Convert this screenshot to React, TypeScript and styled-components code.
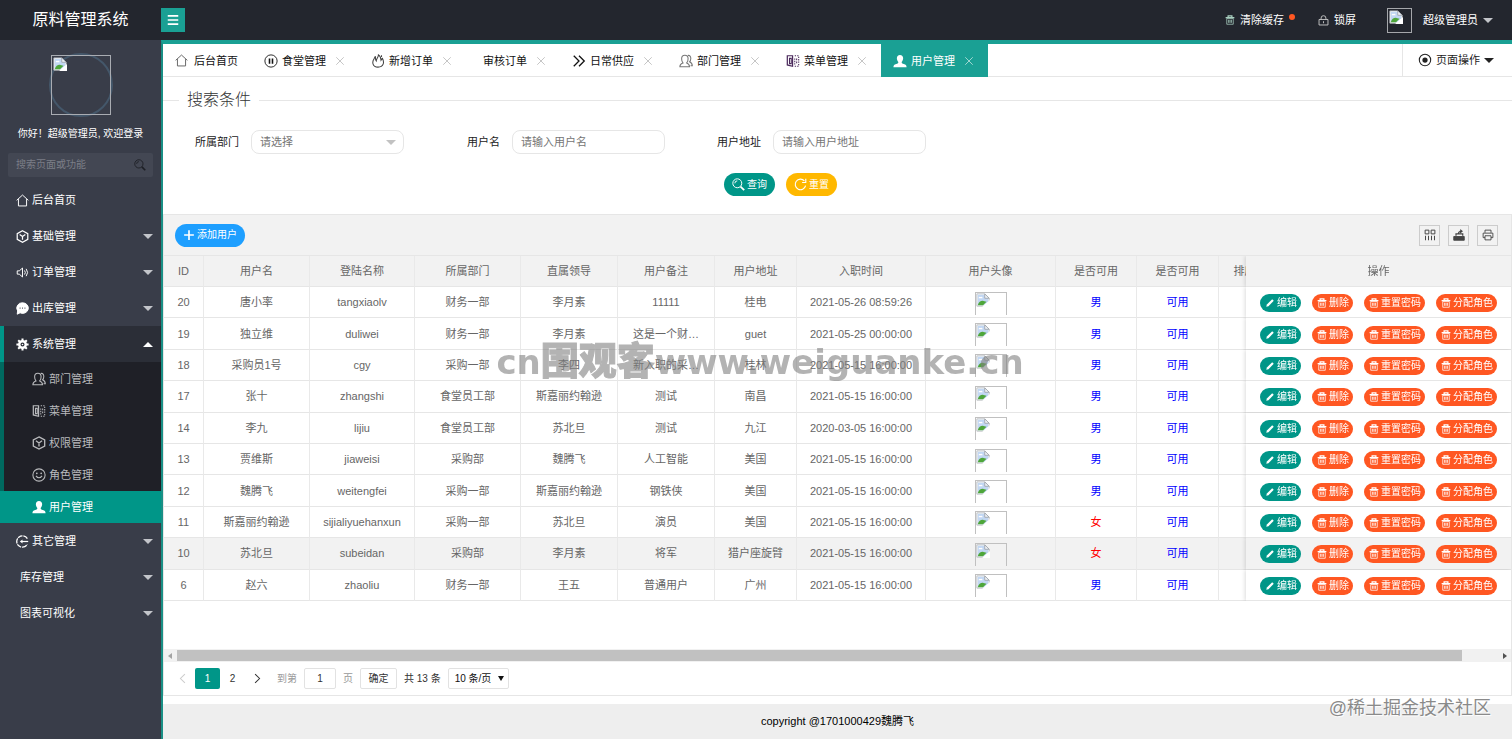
import React from "react";
import styled, { createGlobalStyle, css } from "styled-components";

const GlobalStyle = createGlobalStyle`
  *, *::before, *::after { box-sizing: border-box; }
  body {
    margin: 0;
    font-family: "Liberation Sans", "Noto Sans CJK SC", sans-serif;
    font-size: 11px;
    line-height: 16px;
    color: #222;
    background: #fff;
  }
  button, input, select { font: inherit; color: inherit; margin: 0; }
  button { cursor: pointer; }
  a { color: inherit; text-decoration: none; }
`;

/* ---------- icons ---------- */

type IconName =
  | "home" | "cube" | "sound" | "chat" | "gear" | "group" | "template" | "smile" | "user"
  | "login" | "pause" | "fire" | "more" | "trash" | "lock" | "target" | "search" | "refresh"
  | "plus" | "edit" | "columns" | "export" | "print" | "close" | "menu" | "left" | "right";

const glyphs: Record<IconName, React.ReactNode> = {
  home: <path d="M.8 7.800 8 1.300l7.200 6.500M3 6.300v8.400h10V6.300" />,
  cube: <path d="M8 1 14.500 4.500v7L8 15l-6.500-3.500v-7zM4.500 5.500 8 8l3.500-2.500M8 8v4" strokeWidth="1.500" />,
  sound: <path d="M1.500 6v4h2.500l4 3.500v-11L4 6zM10.500 5.500q2 2.500 0 5M12.500 3.500q3.500 4.500 0 9" />,
  chat: (
    <>
      <path d="M8 1a7 6.500 0 1 1-3 12.300L1.500 15l.5-4A6.500 6.500 0 0 1 8 1z" fill="currentColor" />
      <path d="M4.500 7.500h1M7.500 7.500h1M10.500 7.500h1" stroke="#393D49" strokeWidth="1.600" />
    </>
  ),
  gear: (
    <>
      <circle cx="8" cy="8" r="4" strokeWidth="3" />
      <path d="M8 .5v3M8 12.500v3M.5 8h3M12.500 8h3M2.700 2.700l2 2M11.300 11.300l2 2M2.700 13.300l2-2M11.300 4.700l2-2" strokeWidth="2.500" />
      <circle cx="8" cy="8" r="1" fill="currentColor" stroke="none" />
    </>
  ),
  group: (
    <>
      <path d="M1 14.500c0-3 1.500-3.500 3.500-4.300C3 8.500 3 6.500 3 5.500a3.700 4 0 0 1 7.400 0c0 1.500-.2 3.300-1.600 4.700 2 .8 3.200 1.500 3.200 4.300z" />
      <path d="M10 1.600c2.500-.4 3.500 1.400 3.500 3.400 0 1.800-.6 2.900-1.500 3.900 1.700.7 3.200 1.600 3.200 4.600h-2" />
    </>
  ),
  template: (
    <>
      <path d="M1.500 2h6v12l-6-1.500z" strokeWidth="1.400" />
      <path d="M4 5h2v6H4z" />
      <path d="M10 2h5M10 14h5M10 5v7M14.500 3v10" strokeDasharray="1.500 1.300" />
      <path d="M12.200 5v6" strokeDasharray="2 1.500" />
    </>
  ),
  smile: (
    <>
      <circle cx="8" cy="8" r="7" />
      <path d="M4.500 9q3.500 4.500 7 0" />
      <circle cx="5.500" cy="6" r="1" fill="currentColor" stroke="none" />
      <circle cx="10.500" cy="6" r="1" fill="currentColor" stroke="none" />
    </>
  ),
  user: (
    <path
      d="M8 1c2.300 0 3.600 1.600 3.600 3.800 0 1.800-.8 3.200-1.700 4.200 0 1.500.6 1.800 2.500 2.500C14.500 12.200 15.500 13 15.500 15H.5c0-2 1-2.800 3.100-3.500C5.500 10.800 6.100 10.500 6.100 9c-.9-1-1.700-2.400-1.700-4.200C4.400 2.600 5.700 1 8 1z"
      fill="currentColor"
      stroke="none"
    />
  ),
  login: (
    <>
      <path d="M14 4.500A7 7 0 1 0 14 11.500" strokeWidth="1.600" strokeDasharray="6 1" />
      <path d="M5.500 8H15" strokeWidth="1.500" />
      <path d="M5 8l3-2.500v5z" fill="currentColor" stroke="none" />
    </>
  ),
  pause: (
    <>
      <circle cx="8" cy="8" r="7" strokeWidth="1" />
      <path d="M6.300 5v6M9.700 5v6" strokeWidth="1.800" />
    </>
  ),
  fire: <path d="M3.500 5.500C1 9 1.500 14.800 8 15c6.500-.2 7.500-5.500 5-10l-1.500 2C11.500 4 10 2 8.500 1 8.500 4 6 5 6 8 5 7 5 4.500 5 2.500zM12 1.500v2" />,
  more: <path d="M2 2l6 6-6 6M8 2l6 6-6 6" strokeWidth="1.500" />,
  trash: (
    <>
      <path d="M1 4h14M5 4V1.500h6V4" strokeWidth="2" />
      <path d="M2.800 5.500h10.400v9.300H2.800z" />
      <path d="M5.800 7.500v5M8 7.500v5M10.200 7.500v5" strokeWidth="1.300" />
    </>
  ),
  lock: <path d="M1.500 6.500h13v8h-13zM4.500 6.500v-2a3.500 3.500 0 0 1 7 0v2M8 9v3" strokeWidth="1.300" />,
  target: (
    <>
      <circle cx="8" cy="8" r="6.500" />
      <circle cx="8" cy="8" r="3" fill="currentColor" stroke="none" />
    </>
  ),
  search: (
    <>
      <circle cx="6.500" cy="6.500" r="5.500" />
      <path d="M3.500 6.500a3 3 0 0 1 3-3" />
      <path d="M10.500 10.500l4.500 4.500" strokeWidth="2.200" />
    </>
  ),
  refresh: <path d="M14.300 9.500A6.500 6.500 0 1 1 12.800 3.500M14.500 1v4.500H10" strokeWidth="1.400" />,
  plus: <path d="M8 1.500v13M1.500 8h13" strokeWidth="2.200" />,
  edit: <path d="M2 14l1-3.500L11.500 2 14 4.500 5.500 13z" fill="currentColor" stroke="none" />,
  columns: <path d="M1.500 1.500h5v5h-5zM9.500 1.500h5v5h-5zM2 9v6M6 9v6M10 9v6M14 9v6" strokeWidth="1.300" />,
  export: (
    <>
      <path d="M1 10h14v5H1z" fill="currentColor" />
      <path d="M4 9V6.500h9V9M7 6.500c.5-3 2-3.500 4-3.500M9.500 1l2.500 2-2.500 2" strokeWidth="1.600" />
    </>
  ),
  print: <path d="M4 5V1.500h8V5M4 11.500H1.500V5.500h13v6H12M4 9h8v5.500H4z" />,
  close: <path d="M2 2l12 12M14 2 2 14" strokeWidth="1.500" />,
  menu: <path d="M1 2.500h14M1 8h14M1 13.500h14" strokeWidth="2.200" />,
  left: <path d="M11.500 1.500 5 8l6.500 6.500" strokeWidth="1.500" />,
  right: <path d="M4.500 1.500 11 8l-6.500 6.500" strokeWidth="1.500" />,
};

const Svg = styled.svg<{ $color?: string }>`
  display: block;
  flex: none;
  color: ${(p) => p.$color ?? "inherit"};
`;

const Icon = ({ name, size = 12, color }: { name: IconName; size?: number; color?: string }) => (
  <Svg width={size} height={size} viewBox="0 0 16 16" fill="none" stroke="currentColor" strokeWidth="1.2" $color={color} aria-hidden="true">
    {glyphs[name]}
  </Svg>
);

const Caret = styled.span<{ $up?: boolean; $color?: string }>`
  width: 0;
  height: 0;
  flex: none;
  border: 5px solid transparent;
  border-top-width: ${(p) => (p.$up ? 0 : 5)}px;
  border-bottom-width: ${(p) => (p.$up ? 5 : 0)}px;
  border-${(p) => (p.$up ? "bottom" : "top")}-color: ${(p) => p.$color ?? "#c3c5ca"};
`;

const BrokenImage = () => (
  <Svg width="14" height="14" viewBox="0 0 16 16" aria-hidden="true">
    <path d="M1 1h9l5 5v9H1z" fill="#fff" stroke="#b5b8bd" />
    <path d="M2 2h8v4h4v4L9 14H2z" fill="#c2d7f3" />
    <path d="M3 5.500q1-2 2.500-1 2-.5 2 1.500H3z" fill="#fff" />
    <path d="M2 14c1-4 4-5.500 6.500-5L12 10l-4 4z" fill="#4ea63a" />
    <path d="M10 1v5h5z" fill="#f4f6fa" stroke="#9aa0a8" />
    <path d="M7 16 16 8v8z" fill="#fff" />
  </Svg>
);

/* ---------- shell ---------- */

const Page = styled.div`
  display: flex;
  flex-direction: column;
  min-height: 100vh;
  position: relative;
`;

const Header = styled.header`
  height: 40px;
  display: flex;
  align-items: center;
  background: #23262e;
  color: #fff;
`;

const Brand = styled.h1`
  width: 161px;
  margin: 0;
  text-align: center;
  font-size: 16px;
  font-weight: 400;
  line-height: 40px;
`;

const MenuButton = styled.button`
  width: 24px;
  height: 24px;
  padding: 0;
  border: 0;
  display: grid;
  place-items: center;
  background: #1aa094;
  color: #fff;
`;

const HeaderNav = styled.nav`
  margin-left: auto;
  padding-right: 19px;
  display: flex;
  align-items: center;
  gap: 23px;
`;

const HeaderLink = styled.a<{ $wide?: boolean }>`
  display: flex;
  align-items: center;
  gap: 5px;
  margin-left: ${(p) => (p.$wide ? 8 : 0)}px;
`;

const Dot = styled.span`
  width: 6px;
  height: 6px;
  margin-bottom: 6px;
  border-radius: 50%;
  background: #ff5722;
`;

const SmallAvatar = styled.span`
  width: 25px;
  height: 25px;
  margin-right: 6px;
  border: 1px solid #a5a7ab;
  padding: 1px;
`;

const Body = styled.div`
  flex: 1;
  display: flex;
`;

const Sidebar = styled.aside`
  width: 161px;
  flex: none;
  background: #393d49;
  color: #fff;
`;

const Avatar = styled.div`
  width: 64px;
  height: 64px;
  margin: 13px auto 0;
  border: 2px solid #44576a;
  border-radius: 50%;
  display: grid;
  place-items: center;
`;

const AvatarFrame = styled.span`
  width: 60px;
  height: 60px;
  border: 1px solid #a9acb2;
  padding: 1px;
`;

const Greeting = styled.p`
  margin: 9px 0 11px;
  text-align: center;
  font-size: 10px;
  white-space: nowrap;
`;

const SideSearch = styled.form`
  height: 24px;
  margin: 0 8px 5px;
  padding: 0 7px 0 8px;
  display: flex;
  align-items: center;
  background: #434753;
  border-radius: 2px;
`;

const SideSearchInput = styled.input`
  flex: 1;
  min-width: 0;
  padding: 0;
  border: 0;
  outline: 0;
  background: none;
  font-size: 10px;
  &::placeholder { color: #7b7e87; opacity: 1; }
`;

const GhostButton = styled.button`
  padding: 0;
  border: 0;
  background: none;
  display: flex;
`;

const NavItem = styled.a<{ $open?: boolean; $plain?: boolean }>`
  height: 36px;
  padding: 0 8px 0 ${(p) => (p.$plain ? 20 : 16)}px;
  display: flex;
  align-items: center;
  gap: 3px;
  ${(p) => p.$open && css`
    background: #2b2e37;
    box-shadow: inset 4px 0 #009688;
  `}
`;

const NavLabel = styled.span`
  flex: 1;
`;

const SubNav = styled.div`
  padding-top: 1px;
  background: #1f2027;
  box-shadow: inset 4px 0 #00695f;
`;

const SubItem = styled.a<{ $active?: boolean }>`
  height: 32px;
  padding-left: 32px;
  display: flex;
  align-items: center;
  gap: 3px;
  color: ${(p) => (p.$active ? "#fff" : "#b9babd")};
  background: ${(p) => (p.$active ? "#009688" : "none")};
`;

const Main = styled.main`
  flex: 1;
  min-width: 0;
  display: flex;
  flex-direction: column;
  border-top: 4px solid #1aa094;
  border-left: 2px solid #1a8f85;
`;

/* ---------- tabs ---------- */

const TabBar = styled.div`
  height: 33px;
  display: flex;
  border-bottom: 1px solid #e6e6e6;
`;

const Tab = styled.div<{ $active?: boolean; $home?: boolean; $bare?: boolean }>`
  height: 33px;
  padding: 0 14px 0 ${(p) => (p.$bare ? 17 : 12)}px;
  display: flex;
  align-items: center;
  gap: ${(p) => (p.$home ? 6 : 4)}px;
  white-space: nowrap;
  color: ${(p) => (p.$active ? "#fff" : "#111")};
  background: ${(p) => (p.$active ? "#1aa094" : "none")};
`;

const TabClose = styled.button<{ $active?: boolean }>`
  margin-left: 5px;
  padding: 0;
  border: 0;
  background: none;
  color: ${(p) => (p.$active ? "#a6d9d4" : "#c2c2c2")};
`;

const PageActions = styled.button`
  margin-left: auto;
  padding: 0 18px 0 15px;
  border: 0;
  border-left: 1px solid #e6e6e6;
  background: none;
  display: flex;
  align-items: center;
  gap: 4px;
`;

/* ---------- search form ---------- */

const SearchSet = styled.fieldset`
  margin: 11px 0 0;
  padding: 18px 0;
  border: 0;
  border-top: 1px solid #e6e6e6;
  min-width: 0;
`;

const Legend = styled.legend`
  margin-left: 16px;
  padding: 0 8px;
  font-size: 16px;
  line-height: 24px;
  font-weight: 300;
  color: #333;
`;

const Fields = styled.div`
  padding-left: 12px;
  display: flex;
  flex-wrap: wrap;
  gap: 12px 32px;
`;

const Field = styled.div`
  display: flex;
  align-items: center;
`;

const FieldLabel = styled.label`
  width: 76px;
  padding-right: 12px;
  text-align: right;
`;

const fieldBox = css`
  width: 153px;
  height: 24px;
  padding: 0 8px;
  border: 1px solid #e6e6e6;
  border-radius: 8px;
  outline: 0;
  background: #fff;
  color: #757575;
`;

const TextInput = styled.input`
  ${fieldBox}
  &::placeholder { color: #757575; opacity: 1; }
`;

const SelectWrap = styled.span`
  display: grid;
  align-items: center;
  & > * { grid-area: 1 / 1; }
  & > span { justify-self: end; margin-right: 8px; pointer-events: none; }
`;

const Select = styled.select`
  ${fieldBox}
  appearance: none;
`;

const FormActions = styled.div`
  margin-top: 19px;
  padding-right: 114px;
  display: flex;
  justify-content: center;
  gap: 11px;
`;

const PillButton = styled.button<{ $bg: string }>`
  height: 23px;
  padding: 0 8px;
  border: 0;
  border-radius: 12px;
  display: flex;
  align-items: center;
  gap: 2px;
  font-size: 10px;
  color: #fff;
  background: ${(p) => p.$bg};
`;

/* ---------- data table ---------- */

const TableFrame = styled.section`
  flex: 1;
  min-height: 0;
  display: flex;
  flex-direction: column;
  border: 1px solid #e6e6e6;
`;

const Toolbar = styled.div`
  height: 41px;
  padding: 0 13px 0 11px;
  display: flex;
  align-items: center;
  gap: 8px;
  background: #f2f2f2;
  border-bottom: 1px solid #e6e6e6;
  & > :first-child { margin-right: auto; }
`;

const ToolButton = styled.button`
  width: 21px;
  height: 21px;
  padding: 0;
  border: 1px solid #ccc;
  display: grid;
  place-items: center;
  background: none;
  color: #444;
`;

const Scroller = styled.div`
  flex: 1;
  overflow: hidden;
`;

const Table = styled.table`
  width: 1372px;
  min-width: 100%;
  height: 345px;
  table-layout: fixed;
  border-collapse: separate;
  border-spacing: 0;
  color: #666;
`;

const cell = css`
  padding: 0 12px;
  border-right: 1px solid #e9e9e9;
  border-bottom: 1px solid #e6e6e6;
  text-align: center;
  font-weight: 400;
  white-space: nowrap;
  overflow: hidden;
  text-overflow: ellipsis;
`;

const Th = styled.th<{ $w: number }>`
  ${cell}
  width: ${(p) => p.$w}px;
  height: 31px;
  background: #f2f2f2;
`;

const Td = styled.td<{ $color?: string }>`
  ${cell}
  color: ${(p) => p.$color ?? "inherit"};
`;

const Row = styled.tr<{ $hover?: boolean }>`
  background: ${(p) => (p.$hover ? "#f2f2f2" : "#fff")};
`;

const fixed = css`
  position: sticky;
  right: 0;
  border-right: 0;
  padding: 0;
  box-shadow: -1px 0 4px rgba(0, 0, 0, 0.14);
  overflow: visible;
  clip-path: inset(0 0 0 -6px);
`;

const FixedTh = styled(Th)`${fixed}`;
const FixedTd = styled(Td)`
  ${fixed}
  background: inherit;
`;

const Thumb = styled.span`
  display: block;
  width: 32px;
  height: 23px;
  margin: 2px auto 0;
  border: 1px solid #c0c0c0;
  border-bottom: 0;
`;

const RowActions = styled.div`
  display: flex;
  justify-content: center;
  padding-top: 2px;
  gap: 11px;
`;

const MiniButton = styled.button<{ $bg: string }>`
  height: 18px;
  padding: 0 4px 0 5px;
  border: 0;
  border-radius: 9px;
  display: flex;
  align-items: center;
  gap: 2px;
  font-size: 10px;
  line-height: 18px;
  color: #fff;
  background: ${(p) => p.$bg};
`;

const ScrollBar = styled.div`
  height: 13px;
  padding: 1px 4px;
  display: flex;
  align-items: center;
  background: #f1f1f1;
`;

const ScrollArrow = styled.span<{ $right?: boolean; $color: string }>`
  border: 3px solid transparent;
  border-left: ${(p) => (p.$right ? `4px solid ${p.$color}` : "0")};
  border-right: ${(p) => (p.$right ? "0" : `4px solid ${p.$color}`)};
`;

const ScrollTrack = styled.span`
  flex: 1;
  height: 11px;
  margin: 0 5px;
  padding-right: 36px;
`;

const ScrollThumb = styled.span`
  display: block;
  height: 11px;
  background: #c1c1c1;
`;

const Pager = styled.nav`
  height: 33px;
  padding-left: 6px;
  display: flex;
  align-items: center;
  gap: 7px;
  font-size: 10px;
  color: #333;
`;

const PageLinks = styled.div`
  display: flex;
`;

const PageLink = styled.a<{ $current?: boolean; $muted?: boolean }>`
  width: 25px;
  height: 21px;
  display: grid;
  place-items: center;
  border-radius: 2px;
  color: ${(p) => (p.$current ? "#fff" : p.$muted ? "#ccc" : "#333")};
  background: ${(p) => (p.$current ? "#009688" : "none")};
`;

const JumpLabel = styled.label`
  display: flex;
  align-items: center;
  gap: 7px;
  color: #999;
`;

const PageInput = styled.input`
  width: 32px;
  height: 21px;
  padding: 0;
  border: 1px solid #e2e2e2;
  border-radius: 2px;
  text-align: center;
  color: #333;
`;

const PageButton = styled.button`
  width: 37px;
  height: 21px;
  padding: 0;
  border: 1px solid #e2e2e2;
  border-radius: 2px;
  background: #fff;
`;

const SizeWrap = styled(SelectWrap)`
  & > span { margin-right: 5px; }
`;

const SizeSelect = styled.select`
  appearance: none;
  width: 61px;
  height: 21px;
  padding: 0 6px;
  border: 1px solid #e2e2e2;
  border-radius: 2px;
  background: #fff;
  color: #111;
`;

const SizeArrow = styled.span`
  border: 3px solid transparent;
  border-top: 5px solid #111;
  border-bottom: 0;
`;

const Footer = styled.footer`
  height: 35px;
  margin-top: 8px;
  line-height: 35px;
  text-align: center;
  color: #000;
  background: #eee;
`;

/* ---------- overlays ---------- */

const CenterMark = styled.div`
  position: absolute;
  left: 50%;
  top: 336px;
  transform: translateX(-50%);
  margin-left: 4px;
  display: flex;
  align-items: baseline;
  font-family: "DejaVu Sans", "Noto Sans CJK SC", sans-serif;
  font-weight: 700;
  font-size: 34px;
  line-height: 44px;
  white-space: nowrap;
  color: #808080;
  opacity: 0.6;
  pointer-events: none;
`;

const CenterMarkHan = styled.span`
  font-family: "Noto Sans CJK SC", sans-serif;
  font-size: 38px;
  font-weight: 900;
  -webkit-text-stroke: 1px #808080;
`;

const CornerMark = styled.div`
  position: absolute;
  right: 21px;
  bottom: 19px;
  font-size: 18px;
  line-height: 24px;
  color: #8a8a8a;
  text-shadow: 0 0 2px #fff, 1px 1px 1px #fff;
  pointer-events: none;
`;

/* ---------- data ---------- */

type NavEntry = { label: string; icon?: IconName; leaf?: boolean; children?: { label: string; icon: IconName; active?: boolean }[] };

const navEntries: NavEntry[] = [
  { label: "后台首页", icon: "home", leaf: true },
  { label: "基础管理", icon: "cube" },
  { label: "订单管理", icon: "sound" },
  { label: "出库管理", icon: "chat" },
  {
    label: "系统管理",
    icon: "gear",
    children: [
      { label: "部门管理", icon: "group" },
      { label: "菜单管理", icon: "template" },
      { label: "权限管理", icon: "cube" },
      { label: "角色管理", icon: "smile" },
      { label: "用户管理", icon: "user", active: true },
    ],
  },
  { label: "其它管理", icon: "login" },
  { label: "库存管理" },
  { label: "图表可视化" },
];

const tabs: { label: string; icon?: IconName; color?: string }[] = [
  { label: "食堂管理", icon: "pause" },
  { label: "新增订单", icon: "fire", color: "#444" },
  { label: "审核订单" },
  { label: "日常供应", icon: "more" },
  { label: "部门管理", icon: "group", color: "#777" },
  { label: "菜单管理", icon: "template", color: "#4b2a5c" },
];

const columns: [string, number][] = [
  ["ID", 40], ["用户名", 106], ["登陆名称", 105], ["所属部门", 106], ["直属领导", 97], ["用户备注", 97],
  ["用户地址", 82], ["入职时间", 129], ["用户头像", 130], ["是否可用", 81], ["是否可用", 82], ["排序", 52],
];

const users: [number, string, string, string, string, string, string, string, string][] = [
  [20, "唐小率", "tangxiaolv", "财务一部", "李月素", "11111", "桂电", "2021-05-26 08:59:26", "男"],
  [19, "独立维", "duliwei", "财务一部", "李月素", "这是一个财…", "guet", "2021-05-25 00:00:00", "男"],
  [18, "采购员1号", "cgy", "采购一部", "李四", "新入职的采…", "桂林", "2021-05-15 16:00:00", "男"],
  [17, "张十", "zhangshi", "食堂员工部", "斯嘉丽约翰逊", "测试", "南昌", "2021-05-15 16:00:00", "男"],
  [14, "李九", "lijiu", "食堂员工部", "苏北旦", "测试", "九江", "2020-03-05 16:00:00", "男"],
  [13, "贾维斯", "jiaweisi", "采购部", "魏腾飞", "人工智能", "美国", "2021-05-15 16:00:00", "男"],
  [12, "魏腾飞", "weitengfei", "采购一部", "斯嘉丽约翰逊", "钢铁侠", "美国", "2021-05-15 16:00:00", "男"],
  [11, "斯嘉丽约翰逊", "sijialiyuehanxun", "采购一部", "苏北旦", "演员", "美国", "2021-05-15 16:00:00", "女"],
  [10, "苏北旦", "subeidan", "采购部", "李月素", "将军", "猎户座旋臂", "2021-05-15 16:00:00", "女"],
  [6, "赵六", "zhaoliu", "财务一部", "王五", "普通用户", "广州", "2021-05-15 16:00:00", "男"],
];

/* ---------- page ---------- */

const SideNav = () => (
  <nav>
    {navEntries.map(({ label, icon, leaf, children }) => (
      <React.Fragment key={label}>
        <NavItem href="#" $open={!!children} $plain={!icon}>
          {icon && <Icon name={icon} size={13} />}
          <NavLabel>{label}</NavLabel>
          {!leaf && <Caret $up={!!children} $color={children ? "#fff" : undefined} />}
        </NavItem>
        {children && (
          <SubNav>
            {children.map((c) => (
              <SubItem key={c.label} href="#" $active={c.active}>
                <Icon name={c.icon} size={14} />
                {c.label}
              </SubItem>
            ))}
          </SubNav>
        )}
      </React.Fragment>
    ))}
  </nav>
);

const UserTable = () => (
  <Table>
    <thead>
      <tr>
        {columns.map(([title, w], i) => (
          <Th key={i} $w={w} scope="col">{title}</Th>
        ))}
        <FixedTh $w={265} scope="col">操作</FixedTh>
      </tr>
    </thead>
    <tbody>
      {users.map(([id, name, login, dept, leader, note, addr, time, sex]) => (
        <Row key={id} $hover={id === 10}>
          <Td>{id}</Td>
          <Td>{name}</Td>
          <Td>{login}</Td>
          <Td>{dept}</Td>
          <Td>{leader}</Td>
          <Td>{note}</Td>
          <Td>{addr}</Td>
          <Td>{time}</Td>
          <Td><Thumb role="img" aria-label="头像"><BrokenImage /></Thumb></Td>
          <Td $color={sex === "男" ? "#0000ff" : "#ff0000"}>{sex}</Td>
          <Td $color="#0000ff">可用</Td>
          <Td />
          <FixedTd>
            <RowActions>
              <MiniButton $bg="#009688"><Icon name="edit" size={10} />编辑</MiniButton>
              <MiniButton $bg="#ff5722"><Icon name="trash" size={10} />删除</MiniButton>
              <MiniButton $bg="#ff5722"><Icon name="trash" size={10} />重置密码</MiniButton>
              <MiniButton $bg="#ff5722"><Icon name="trash" size={10} />分配角色</MiniButton>
            </RowActions>
          </FixedTd>
        </Row>
      ))}
    </tbody>
  </Table>
);

export default function App() {
  return (
    <Page>
      <GlobalStyle />
      <Header>
        <Brand>原料管理系统</Brand>
        <MenuButton aria-label="菜单"><Icon name="menu" /></MenuButton>
        <HeaderNav>
          <HeaderLink href="#"><Icon name="trash" size={10} color="#a9cfc0" />清除缓存<Dot /></HeaderLink>
          <HeaderLink href="#"><Icon name="lock" size={11} color="#ccc" />锁屏</HeaderLink>
          <HeaderLink href="#" $wide>
            <SmallAvatar role="img" aria-label="头像"><BrokenImage /></SmallAvatar>
            超级管理员
            <Caret />
          </HeaderLink>
        </HeaderNav>
      </Header>
      <Body>
        <Sidebar>
          <Avatar><AvatarFrame role="img" aria-label="头像"><BrokenImage /></AvatarFrame></Avatar>
          <Greeting>你好！超级管理员, 欢迎登录</Greeting>
          <SideSearch>
            <SideSearchInput aria-label="搜索" placeholder="搜索页面或功能" />
            <GhostButton type="button" aria-label="搜索"><Icon name="search" color="#1d1f25" /></GhostButton>
          </SideSearch>
          <SideNav />
        </Sidebar>
        <Main>
          <TabBar>
            <Tab $home><Icon name="home" size={13} color="#666" />后台首页</Tab>
            {tabs.map((t) => (
              <Tab key={t.label} $bare={!t.icon}>
                {t.icon && <Icon name={t.icon} size={14} color={t.color} />}
                {t.label}
                <TabClose aria-label="关闭"><Icon name="close" size={10} /></TabClose>
              </Tab>
            ))}
            <Tab $active>
              <Icon name="user" size={14} />
              用户管理
              <TabClose $active aria-label="关闭"><Icon name="close" size={10} /></TabClose>
            </Tab>
            <PageActions><Icon name="target" size={14} />页面操作<Caret $color="#222" /></PageActions>
          </TabBar>

          <SearchSet>
            <Legend>搜索条件</Legend>
            <Fields>
              <Field>
                <FieldLabel htmlFor="dept">所属部门</FieldLabel>
                <SelectWrap>
                  <Select id="dept"><option>请选择</option></Select>
                  <Caret $color="#c2c2c2" />
                </SelectWrap>
              </Field>
              <Field>
                <FieldLabel htmlFor="name">用户名</FieldLabel>
                <TextInput id="name" placeholder="请输入用户名" />
              </Field>
              <Field>
                <FieldLabel htmlFor="addr">用户地址</FieldLabel>
                <TextInput id="addr" placeholder="请输入用户地址" />
              </Field>
            </Fields>
            <FormActions>
              <PillButton $bg="#009688"><Icon name="search" size={13} />查询</PillButton>
              <PillButton $bg="#ffb800"><Icon name="refresh" size={13} />重置</PillButton>
            </FormActions>
          </SearchSet>

          <TableFrame>
            <Toolbar>
              <PillButton $bg="#1e9fff"><Icon name="plus" />添加用户</PillButton>
              <ToolButton aria-label="筛选列"><Icon name="columns" /></ToolButton>
              <ToolButton aria-label="导出"><Icon name="export" /></ToolButton>
              <ToolButton aria-label="打印"><Icon name="print" /></ToolButton>
            </Toolbar>
            <Scroller><UserTable /></Scroller>
            <ScrollBar>
              <ScrollArrow $color="#a3a3a3" />
              <ScrollTrack><ScrollThumb /></ScrollTrack>
              <ScrollArrow $right $color="#505050" />
            </ScrollBar>
            <Pager aria-label="分页">
              <PageLinks>
                <PageLink href="#" $muted aria-label="上一页"><Icon name="left" size={11} /></PageLink>
                <PageLink href="#" $current>1</PageLink>
                <PageLink href="#">2</PageLink>
                <PageLink href="#" aria-label="下一页"><Icon name="right" size={11} /></PageLink>
              </PageLinks>
              <JumpLabel>到第<PageInput defaultValue="1" />页</JumpLabel>
              <PageButton>确定</PageButton>
              <span>共 13 条</span>
              <SizeWrap>
                <SizeSelect aria-label="每页条数"><option>10 条/页</option></SizeSelect>
                <SizeArrow />
              </SizeWrap>
            </Pager>
          </TableFrame>
          <Footer>copyright @1701000429魏腾飞</Footer>
        </Main>
      </Body>
      <CenterMark>cn<CenterMarkHan>围观客</CenterMarkHan>www.weiguanke.cn</CenterMark>
      <CornerMark>@稀土掘金技术社区</CornerMark>
    </Page>
  );
}
